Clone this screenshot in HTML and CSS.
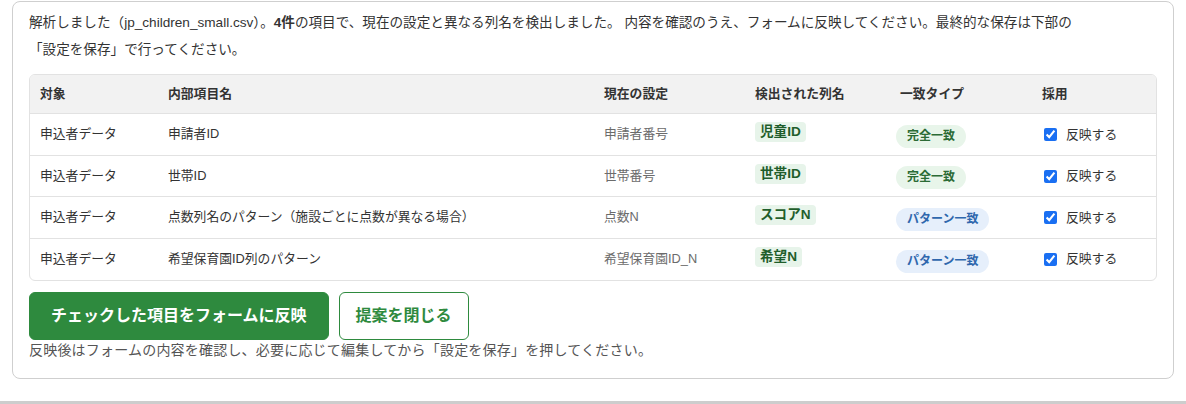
FILE: index.html
```html
<!DOCTYPE html>
<html lang="ja">
<head>
<meta charset="utf-8">
<title>列名の検出</title>
<link rel="stylesheet" href="styles.css">
</head>
<body>
<div class="page">
  <section class="card">
    <p class="intro">解析しました（jp_children_small.csv）。<strong>4件</strong>の項目で、現在の設定と異なる列名を検出しました。 内容を確認のうえ、フォームに反映してください。最終的な保存は下部の<span class="nowrap">「設定を保存」</span>で行ってください。</p>
    <div class="table-wrap">
      <table class="diff">
        <colgroup>
          <col class="c1"><col class="c2"><col class="c3"><col class="c4"><col class="c5"><col class="c6">
        </colgroup>
        <thead>
          <tr><th>対象</th><th>内部項目名</th><th>現在の設定</th><th>検出された列名</th><th>一致タイプ</th><th>採用</th></tr>
        </thead>
        <tbody>
          <tr>
            <td>申込者データ</td><td>申請者ID</td><td class="cur">申請者番号</td>
            <td><span class="tag">児童ID</span></td>
            <td><span class="pill exact">完全一致</span></td>
            <td><label class="adopt"><input type="checkbox" checked>反映する</label></td>
          </tr>
          <tr>
            <td>申込者データ</td><td>世帯ID</td><td class="cur">世帯番号</td>
            <td><span class="tag">世帯ID</span></td>
            <td><span class="pill exact">完全一致</span></td>
            <td><label class="adopt"><input type="checkbox" checked>反映する</label></td>
          </tr>
          <tr>
            <td>申込者データ</td><td>点数列名のパターン（施設ごとに点数が異なる場合）</td><td class="cur">点数N</td>
            <td><span class="tag">スコアN</span></td>
            <td><span class="pill pattern">パターン一致</span></td>
            <td><label class="adopt"><input type="checkbox" checked>反映する</label></td>
          </tr>
          <tr>
            <td>申込者データ</td><td>希望保育園ID列のパターン</td><td class="cur">希望保育園ID_N</td>
            <td><span class="tag">希望N</span></td>
            <td><span class="pill pattern">パターン一致</span></td>
            <td><label class="adopt"><input type="checkbox" checked>反映する</label></td>
          </tr>
        </tbody>
      </table>
    </div>
    <div class="actions">
      <button class="btn primary" type="button">チェックした項目をフォームに反映</button>
      <button class="btn secondary" type="button">提案を閉じる</button>
    </div>
    <p class="note">反映後はフォームの内容を確認し、必要に応じて編集してから「設定を保存」を押してください。</p>
  </section>
  <div class="next"></div>
</div>
</body>
</html>
```

FILE: styles.css
```css
* { box-sizing: border-box; }

html, body {
  margin: 0;
  background: #ffffff;
}

body {
  font-family: "Liberation Sans", "Noto Sans CJK JP", sans-serif;
  color: #333333;
}

.page {
  padding: 1px 12px 0;
}

.card {
  border: 1px solid #cfcfcf;
  border-radius: 8px;
  background: #fff;
  padding: 7px 16px 17px;
}

.intro {
  margin: 0 0 11px;
  font-size: 13.6px;
  line-height: 27px;
  color: #333;
}

.intro strong { font-weight: 700; }

.nowrap { white-space: nowrap; }

.table-wrap {
  border: 1px solid #e2e2e2;
  border-radius: 6px;
  overflow: hidden;
}

.diff {
  width: 100%;
  border-collapse: collapse;
  table-layout: fixed;
  font-size: 12.8px;
}

.c1 { width: 128px; }
.c2 { width: 436px; }
.c3 { width: 151px; }
.c4 { width: 145px; }
.c5 { width: 142px; }
.c6 { width: 124px; }

.diff th {
  background: #f2f2f2;
  text-align: left;
  font-weight: 700;
  color: #333;
  padding: 12px 10px;
  line-height: 14px;
  border-bottom: 1px solid #e2e2e2;
}

.diff tbody tr { height: 41.5px; }

.diff td {
  padding: 0 10px;
  line-height: 16px;
  vertical-align: middle;
  border-bottom: 1px solid #e2e2e2;
  color: #333;
}

.diff tbody tr:last-child td { border-bottom: none; }

.diff td.cur { color: #6b6b6b; }

.tag {
  display: inline-block;
  background: #e7f4ea;
  color: #1f5e2b;
  font-weight: 700;
  font-size: 13.6px;
  line-height: 18px;
  padding: 1px 5px;
  border-radius: 4px;
  vertical-align: middle;
  margin-top: -2px;
  margin-bottom: 2px;
}

.pill {
  display: inline-block;
  font-size: 12px;
  font-weight: 700;
  line-height: 15px;
  padding: 4px 11px;
  border-radius: 12px;
  vertical-align: middle;
  margin-left: -4px;
  margin-top: 2px;
  margin-bottom: -2px;
}

.pill.exact {
  background: #e8f5ea;
  color: #2b6b35;
}

.pill.pattern {
  background: #e6effb;
  color: #2f67ad;
}

.adopt {
  display: inline-flex;
  align-items: center;
  gap: 9px;
  color: #333;
  font-size: 12.8px;
  vertical-align: middle;
}

.adopt input {
  margin: 0 0 0 2px;
  width: 13px;
  height: 13px;
  accent-color: #1a6ff2;
}

.actions {
  display: flex;
  gap: 10px;
  margin-top: 11px;
}

.btn {
  font-family: "Liberation Sans", "Noto Sans CJK JP", sans-serif;
  font-size: 16px;
  font-weight: 700;
  line-height: 20px;
  border-radius: 6px;
  border: 1px solid #2e8a3e;
  cursor: pointer;
}

.btn.primary {
  background: #2e8a3e;
  color: #ffffff;
  padding: 13px 21px;
}

.btn.secondary {
  background: #ffffff;
  color: #2e8a3e;
  padding: 13px 16px;
}

.note {
  margin: 0;
  font-size: 14px;
  line-height: 21px;
  letter-spacing: 0.2px;
  color: #555;
}

.next {
  margin-top: 22px;
  height: 3px;
  background: #cdcdcd;
  margin-left: -12px;
  margin-right: -12px;
}
```
